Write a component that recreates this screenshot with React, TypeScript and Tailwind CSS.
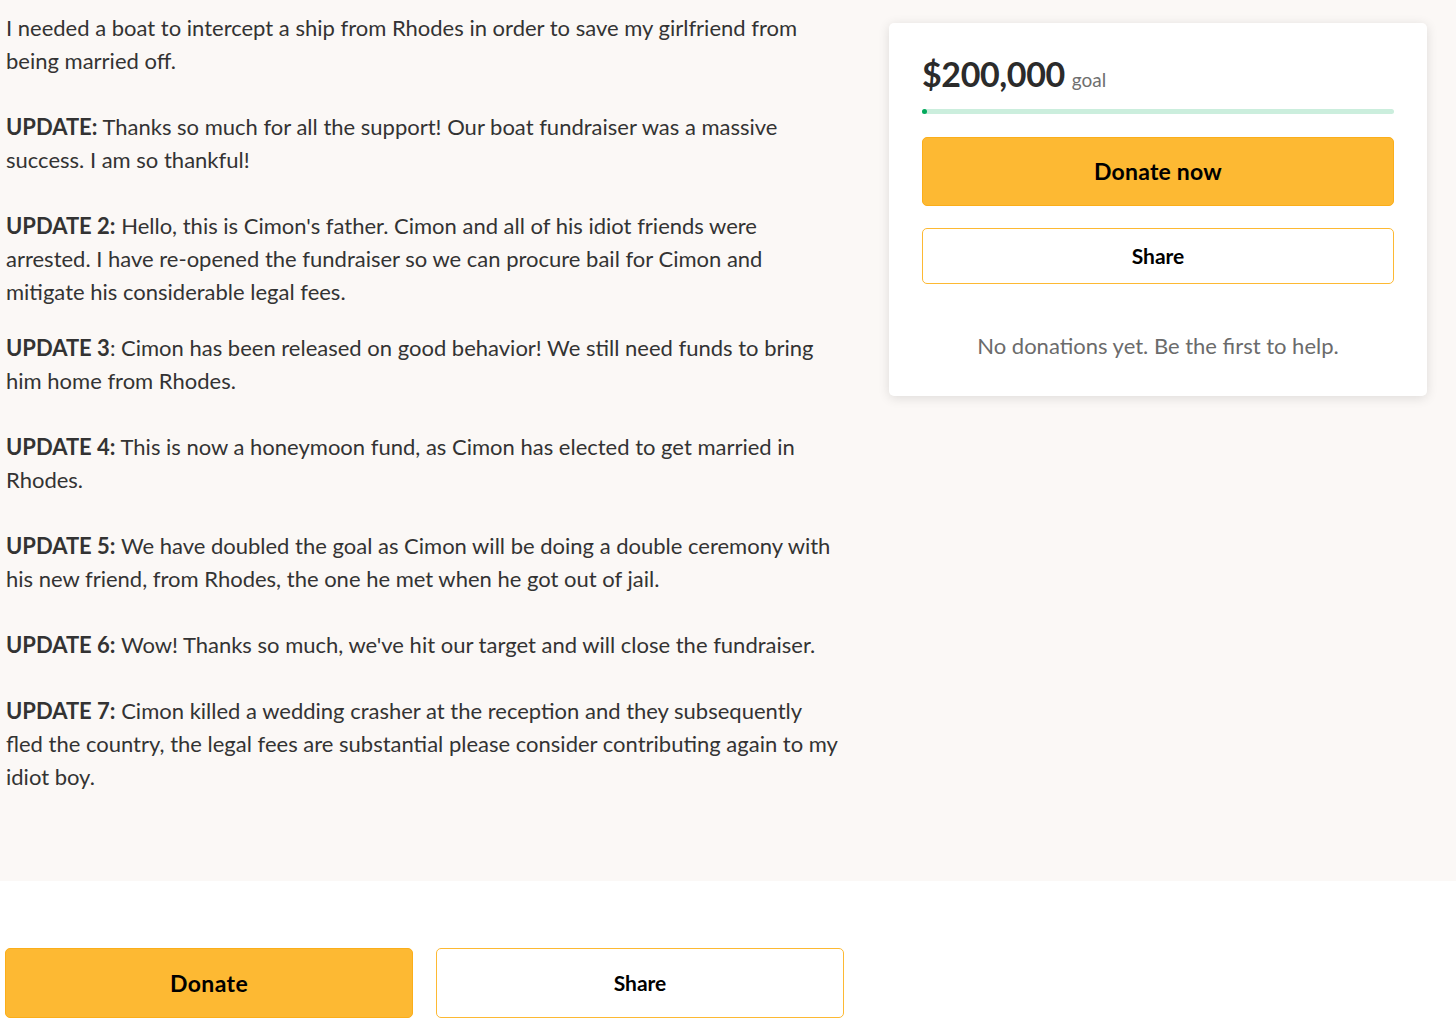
import React from "react";

const P = ({ children, className = "" }: { children: React.ReactNode; className?: string }) => (
  <p className={"m-0 " + className}>{children}</p>
);

export default function App() {
  return (
    <div className="w-[1456px] min-h-[1022px] bg-white text-[#333333] font-['Lato','Liberation_Sans',sans-serif]">
      <div className="bg-[#fbf8f6] h-[881px] flex items-start">
        <div className="w-[843px] shrink-0 pl-[6px] pt-[11px] text-[22px] leading-[33px]">
          <P>I needed a boat to intercept a ship from Rhodes in order to save my girlfriend from being married off.</P>
          <P className="mt-[33px]"><b className="font-bold">UPDATE:</b> Thanks so much for all the support! Our boat fundraiser was a massive success. I am so thankful!</P>
          <P className="mt-[33px]"><b className="font-bold">UPDATE 2:</b> Hello, this is Cimon's father. Cimon and all of his idiot friends were arrested. I have re-opened the fundraiser so we can procure bail for Cimon and mitigate his considerable legal fees.</P>
          <P className="mt-[23px]"><b className="font-bold">UPDATE 3</b>: Cimon has been released on good behavior! We still need funds to bring him home from Rhodes.</P>
          <P className="mt-[33px]"><b className="font-bold">UPDATE 4:</b> This is now a honeymoon fund, as Cimon has elected to get married in Rhodes.</P>
          <P className="mt-[33px]"><b className="font-bold">UPDATE 5:</b> We have doubled the goal as Cimon will be doing a double ceremony with his new friend, from Rhodes, the one he met when he got out of jail.</P>
          <P className="mt-[33px]"><b className="font-bold">UPDATE 6:</b> Wow! Thanks so much, we've hit our target and will close the fundraiser.</P>
          <P className="mt-[33px]"><b className="font-bold">UPDATE 7:</b> Cimon killed a wedding crasher at the reception and they subsequently fled the country, the legal fees are substantial please consider contributing again to my idiot boy.</P>
        </div>
        <div className="ml-[46px] mt-[23px] w-[538px] shrink-0 bg-white rounded-[5px] shadow-[0_2px_12px_rgba(0,0,0,0.12)] px-[33px] pt-[30px] pb-[35px]">
          <div className="flex items-baseline gap-[7px]">
            <span className="text-[34px] font-bold text-[#2b2b2b] leading-[42px] tracking-[-0.4px]">$200,000</span>
            <span className="text-[19px] text-[#6f6f6f]">goal</span>
          </div>
          <div className="mt-[14px] h-[5px] w-full rounded-full bg-[#cbeedd] relative">
            <div className="absolute left-0 top-0 h-[5px] w-[5px] rounded-full bg-[#02a95c]" />
          </div>
          <button className="mt-[23px] w-full h-[69px] rounded-[5px] bg-[#fdb933] border border-[#fbae1a] text-[23px] tracking-[0.2px] font-bold text-black">
            Donate now
          </button>
          <button className="mt-[22px] w-full h-[56px] rounded-[5px] bg-white border border-[#fdb933] text-[21px] font-bold text-black">
            Share
          </button>
          <div className="mt-[47px] text-center text-[22px] text-[#6b6b6b] leading-[30px]">
            No donations yet. Be the first to help.
          </div>
        </div>
      </div>
      <div className="flex gap-[23px] pl-[5px] pt-[67px]">
        <button className="w-[408px] h-[70px] rounded-[5px] bg-[#fdb933] border border-[#fbae1a] text-[23px] tracking-[0.4px] font-bold text-black">
          Donate
        </button>
        <button className="w-[408px] h-[70px] rounded-[5px] bg-white border border-[#fdb933] text-[21px] font-bold text-black">
          Share
        </button>
      </div>
    </div>
  );
}
